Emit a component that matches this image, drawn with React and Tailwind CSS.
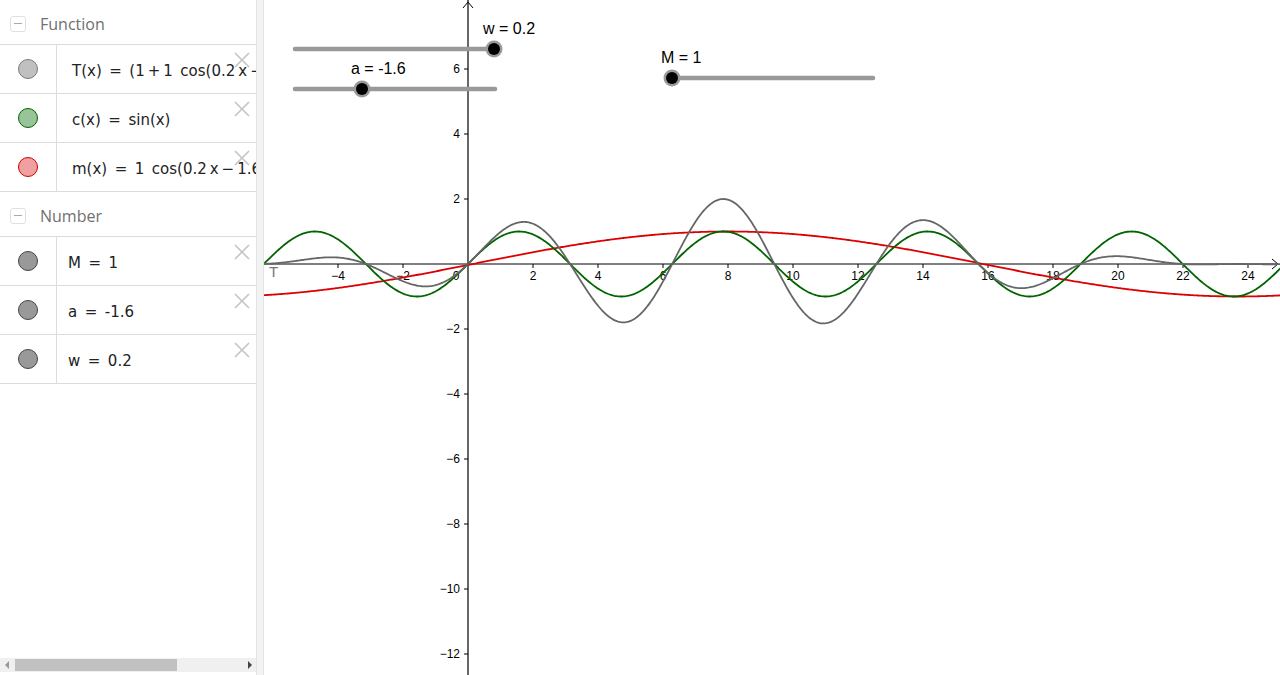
import React from "react";

const OX = 468;
const OY = 264;
const S = 32.5;
const LEFT = 264;

const px = (x) => OX - LEFT + x * S;
const py = (y) => OY - y * S;

const curve = (f) => {
  let d = "";
  for (let x = -6.3; x <= 25.05; x += 0.04) {
    d += (d ? " L" : "M") + px(x).toFixed(2) + " " + py(f(x)).toFixed(2);
  }
  return d;
};

const fT = (x) => (1 + Math.cos(0.2 * x - 1.6)) * Math.sin(x);
const fC = (x) => Math.sin(x);
const fM = (x) => Math.cos(0.2 * x - 1.6);

const xTicks = [-4, -2, 2, 4, 6, 8, 10, 12, 14, 16, 18, 20, 22, 24];
const yTicks = [6, 4, 2, -2, -4, -6, -8, -10, -12];
const num = (n) => (n < 0 ? "\u2212" + Math.abs(n) : String(n));

const EQ = "\u2002=\u2002";
const functions = [
  { text: `T(x)${EQ}(1\u2009+\u20091\u2002cos(0.2\u2009x\u2009\u2212\u20091.6))\u2009sin(x)`, dot: "bg-[#c0c0c0] border-[#7a7a7a]" },
  { text: `c(x)${EQ}sin(x)`, dot: "bg-[#99c499] border-[#006400]" },
  { text: `m(x)${EQ}1\u2002cos(0.2\u2009x\u2009\u2212\u20091.6)`, dot: "bg-[#f0a0a0] border-[#cc0000]" },
];
const numbers = [`M${EQ}1`, `a${EQ}-1.6`, `w${EQ}0.2`];

function Close() {
  return (
    <svg className="absolute right-[6px] top-[7px]" width="16" height="16" viewBox="0 0 16 16">
      <path d="M1 1 L15 15 M15 1 L1 15" stroke="#c4c4c4" strokeWidth="1.6" />
    </svg>
  );
}

function Header({ label }) {
  return (
    <div className="h-[45px] pt-[3px] flex items-center border-b border-[#dcdcdc]">
      <div className="ml-[10px] w-[16px] h-[16px] border border-[#e0e0e0] rounded-[3px] flex items-center justify-center">
        <div className="w-[8px] h-[1px] bg-[#aaaaaa]" />
      </div>
      <span className="ml-[14px] text-[16px] text-[#707070]">{label}</span>
    </div>
  );
}

function Row({ dot, text, pl }) {
  return (
    <div className="h-[49px] flex border-b border-[#dcdcdc]">
      <div className="w-[57px] border-r border-[#dcdcdc] flex items-center justify-center shrink-0">
        <div className={`w-[20px] h-[20px] rounded-full border ${dot}`} />
      </div>
      <div
        className={`relative flex-1 flex items-center pt-[5px] overflow-hidden whitespace-pre text-[15px] text-[#222] ${pl}`}
        style={{ fontFamily: '"DejaVu Sans", sans-serif' }}
      >
        {text}
        <Close />
      </div>
    </div>
  );
}

function Slider({ x1, x2, y, knob, label, lx, ly }) {
  return (
    <g>
      <line x1={x1} y1={y} x2={x2} y2={y} stroke="#999999" strokeWidth="4.5" strokeLinecap="round" />
      <circle cx={knob} cy={y} r="8.5" fill="#9a9a9a" />
      <circle cx={knob} cy={y} r="6" fill="#000" />
      <text x={lx} y={ly} fontSize="16" fill="#000">{label}</text>
    </g>
  );
}

export default function App() {
  return (
    <div className="w-[1280px] h-[675px] flex bg-white overflow-hidden" style={{ fontFamily: '"Liberation Sans", Arial, sans-serif' }}>
      <aside className="w-[256px] shrink-0 flex flex-col" style={{ fontFamily: '"Open Sans", "DejaVu Sans", sans-serif' }}>
        <Header label="Function" />
        {functions.map((f) => (
          <Row key={f.text} dot={f.dot} text={f.text} pl="pl-[15px]" />
        ))}
        <Header label="Number" />
        {numbers.map((n) => (
          <Row key={n} dot="bg-[#999999] border-[#444444]" text={n} pl="pl-[11px]" />
        ))}
        <div className="flex-1" />
        <div className="h-[14px] mb-[3px] bg-[#f0f0f0] flex items-center">
          <span className="w-0 h-0 ml-[5px] border-y-[4px] border-y-transparent border-r-[4px] border-r-[#999]" />
          <div className="ml-[6px] w-[162px] h-[12px] bg-[#c1c1c1]" />
          <div className="flex-1" />
          <span className="w-0 h-0 mr-[4px] border-y-[4px] border-y-transparent border-l-[4px] border-l-[#444]" />
        </div>
      </aside>
      <div className="w-[8px] shrink-0 bg-[#f3f3f3] border-x border-[#e3e3e3]" />
      <main className="relative flex-1">
        <svg width="1016" height="675" className="block">
          <line x1="0" y1={OY} x2="1014" y2={OY} stroke="#000" strokeWidth="1" />
          <path d={`M1008 ${OY - 5} L1014 ${OY} L1008 ${OY + 5}`} fill="none" stroke="#000" strokeWidth="1" />
          <line x1={px(0)} y1="0" x2={px(0)} y2="675" stroke="#000" strokeWidth="1.2" />
          <path d={`M${px(0) - 5} 8 L${px(0)} 2 L${px(0) + 5} 8`} fill="none" stroke="#000" strokeWidth="1" />
          {xTicks.map((t) => (
            <g key={t}>
              <line x1={px(t)} y1={OY} x2={px(t)} y2={OY + 4} stroke="#000" />
              <text x={px(t)} y={OY + 16} fontSize="12" textAnchor="middle" fill="#000">{num(t)}</text>
            </g>
          ))}
          <text x={px(0) - 12} y={OY + 16} fontSize="12" textAnchor="middle">0</text>
          {yTicks.map((t) => (
            <g key={t}>
              <line x1={px(0) - 4} y1={py(t)} x2={px(0)} y2={py(t)} stroke="#000" />
              <text x={px(0) - 8} y={py(t) + 4} fontSize="12" textAnchor="end" fill="#000">{num(t)}</text>
            </g>
          ))}
          <path d={curve(fM)} fill="none" stroke="#dd0000" strokeWidth="1.8" />
          <path d={curve(fC)} fill="none" stroke="#006400" strokeWidth="1.8" />
          <path d={curve(fT)} fill="none" stroke="#666666" strokeWidth="1.8" />
          <text x="5" y="277" fontSize="15" fill="#777777">T</text>
          <Slider x1={31} x2={229} y={49} knob={230} label="w = 0.2" lx={219} ly={34} />
          <Slider x1={31} x2={231} y={89} knob={98} label="a = -1.6" lx={87} ly={74} />
          <Slider x1={408} x2={609} y={78} knob={408} label="M = 1" lx={397} ly={63} />
        </svg>
      </main>
    </div>
  );
}
